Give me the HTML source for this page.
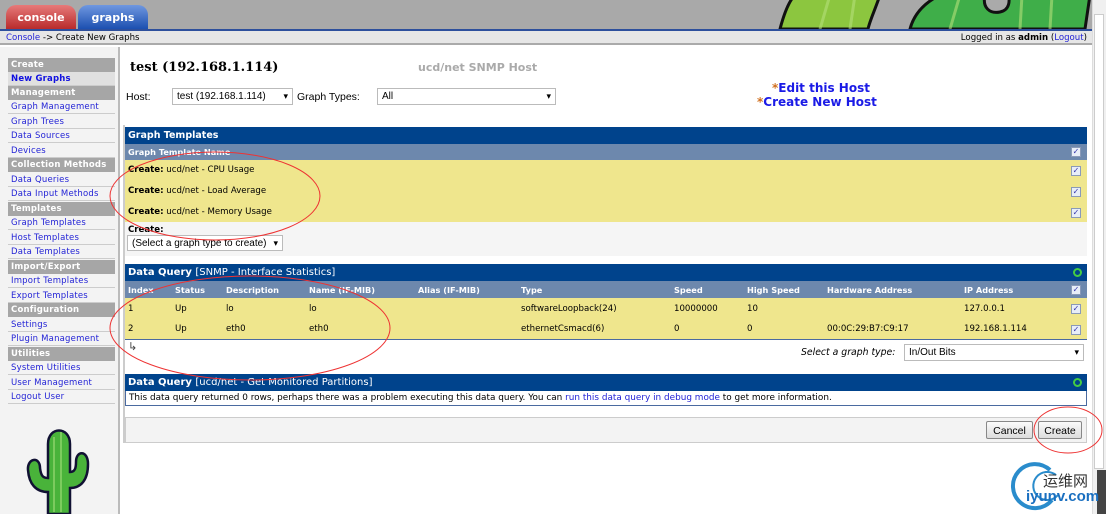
<!DOCTYPE html>
<html><head><meta charset="utf-8"><style>
*{margin:0;padding:0;box-sizing:border-box}
body{width:1106px;height:514px;overflow:hidden;background:#fff;font-family:"DejaVu Sans","Liberation Sans",sans-serif;font-size:8.6px;color:#000;position:relative}
.a{position:absolute;white-space:nowrap}
.hd{background:#00438c;color:#fff;font-weight:bold}
.sh{background:#6d88ad;color:#fff;font-weight:bold;font-size:8.2px}
.yl{background:#efe68d}
.t{font-size:8.6px}
.side div{position:absolute;left:8px;width:107px;height:14px;line-height:14px;padding-left:3px;font-size:8.5px;letter-spacing:.2px}
.sg{background:#a6a6a6;color:#fff;font-weight:bold}
.si{color:#2323d6;border-bottom:1px solid #ccc}
.cb{position:absolute;width:10px;height:10px;border:1px solid #8a9ab8;background:#e8eef8;font-size:8px;line-height:8px;text-align:center;color:#33a}
.sel{position:absolute;border:1px solid #bbb;background:#fff;font-family:"Liberation Sans",sans-serif;font-size:10px;line-height:15px;padding-left:4px}
.sel:after{content:"▾";position:absolute;right:4px;top:0;font-size:9px}
.btn{position:absolute;border:1px solid #888;border-radius:2px;background:linear-gradient(#fbfbfb,#dcdcdc);font-family:"Liberation Sans",sans-serif;font-size:10.5px;text-align:center;line-height:18px}
</style></head><body>
<div class="a" style="left:0;top:0;width:1092px;height:29px;background:#a9a9a9"></div>
<div class="a" style="left:6px;top:5px;width:70px;height:24px;background:linear-gradient(#e77a7a,#b82b2b);border-radius:10px 10px 0 0;color:#fff;font-weight:bold;font-size:11px;text-align:center;line-height:26px">console</div>
<div class="a" style="left:78px;top:5px;width:70px;height:24px;background:linear-gradient(#6f97e0,#1c4fb0);border-radius:10px 10px 0 0;color:#fff;font-weight:bold;font-size:11px;text-align:center;line-height:26px">graphs</div>
<svg class="a" style="left:760px;top:0" width="332" height="29">
<path d="M20 29 C25 10 30 0 35 -5 L120 -5 C115 10 110 20 108 29Z" fill="#8cc63f" stroke="#111" stroke-width="3"/>
<path d="M150 29 C155 10 170 0 180 -5 L330 -5 L325 29Z" fill="#3fae49" stroke="#111" stroke-width="3"/>
<path d="M225 -5 C222 8 230 14 240 12 C250 10 250 0 248 -5" fill="#aaa" stroke="#111" stroke-width="3"/>
<path d="M60 29 L70 -5 M90 29 L95 -5 M190 29 L200 -5 M260 29 L262 -5 M290 29 L292 -5" stroke="#b5e07a" stroke-width="3" opacity=".6"/>
</svg>
<div class="a" style="left:0;top:29px;width:1092px;height:2px;background:#2d4f9c"></div>
<div class="a" style="left:0;top:31px;width:1092px;height:14px;background:#e6e6e6;border-bottom:2px solid #aaa;font-size:8.6px;line-height:14px;padding-left:6px"><span style="color:#2323d6">Console</span> -&gt; Create New Graphs</div>
<div class="a" style="left:880px;top:31px;width:207px;text-align:right;font-size:8.6px;line-height:14px">Logged in as <b>admin</b> (<span style="color:#2323d6">Logout</span>)</div>
<div class="a" style="left:1092px;top:0;width:14px;height:514px;background:#f0f0f0;border-left:1px solid #ddd"></div>
<div class="a" style="left:1094px;top:14px;width:10px;height:455px;background:#fff;border:1px solid #ccc"></div>
<div class="a" style="left:1097px;top:470px;width:9px;height:44px;background:#444"></div>
<div class="a" style="left:0;top:47px;width:120px;height:467px;background:#f3f3f3;border-right:2px solid #bbb"></div>
<div class="side">
<div class="sg" style="top:58px">Create</div>
<div class="si" style="top:72px;background:#e0e0e0;font-weight:bold;color:#1010e0">New Graphs</div>
<div class="sg" style="top:86px">Management</div>
<div class="si" style="top:100px">Graph Management</div>
<div class="si" style="top:115px">Graph Trees</div>
<div class="si" style="top:129px">Data Sources</div>
<div class="si" style="top:144px">Devices</div>
<div class="sg" style="top:158px">Collection Methods</div>
<div class="si" style="top:173px">Data Queries</div>
<div class="si" style="top:187px">Data Input Methods</div>
<div class="sg" style="top:202px">Templates</div>
<div class="si" style="top:216px">Graph Templates</div>
<div class="si" style="top:231px">Host Templates</div>
<div class="si" style="top:245px">Data Templates</div>
<div class="sg" style="top:260px">Import/Export</div>
<div class="si" style="top:274px">Import Templates</div>
<div class="si" style="top:289px">Export Templates</div>
<div class="sg" style="top:303px">Configuration</div>
<div class="si" style="top:318px">Settings</div>
<div class="si" style="top:332px">Plugin Management</div>
<div class="sg" style="top:347px">Utilities</div>
<div class="si" style="top:361px">System Utilities</div>
<div class="si" style="top:376px">User Management</div>
<div class="si" style="top:390px">Logout User</div>
</div>
<svg class="a" style="left:26px;top:422px" width="74" height="92">
<path d="M22 92 L22 70 C10 70 3 62 2 48 C1 36 14 34 14 46 C15 54 17 56 22 56 L22 22 C22 4 44 4 44 22 L44 50 C49 50 50 46 50 40 C50 28 62 28 62 42 C62 58 55 66 44 66 L44 92Z" fill="#49b33a" stroke="#113" stroke-width="2.5"/>
<path d="M28 15 L28 90 M35 10 L35 90" stroke="#8ed36a" stroke-width="1.5"/>
</svg>
<div class="a" style="left:130px;top:60px;font-family:'DejaVu Serif','Liberation Serif',serif;font-weight:bold;font-size:13px">test (192.168.1.114)</div>
<div class="a" style="left:418px;top:61px;font-weight:bold;font-size:11px;color:#aaa">ucd/net SNMP Host</div>
<div class="a" style="left:126px;top:91px;font-family:'Liberation Sans',sans-serif;font-size:10.5px">Host:</div>
<div class="sel" style="left:172px;top:88px;width:121px;height:17px">test (192.168.1.114)</div>
<div class="a" style="left:297px;top:91px;font-family:'Liberation Sans',sans-serif;font-size:10.5px">Graph Types:</div>
<div class="sel" style="left:377px;top:88px;width:179px;height:17px">All</div>
<div class="a" style="left:772px;top:81px;font-weight:bold;font-size:12px;color:#1a1ae6"><span style="color:#d07020">*</span>Edit this Host</div>
<div class="a" style="left:757px;top:95px;font-weight:bold;font-size:12px;color:#1a1ae6"><span style="color:#d07020">*</span>Create New Host</div>

<div class="a hd" style="left:125px;top:127px;width:962px;height:17px;font-size:9.5px;line-height:17px;padding-left:3px">Graph Templates</div>
<div class="a sh" style="left:125px;top:144px;width:962px;height:16px;line-height:16px;padding-left:3px">Graph Template Name</div>
<div class="cb" style="left:1071px;top:147px">✓</div>
<div class="a yl" style="left:125px;top:160px;width:962px;height:62px"></div>
<div class="a t" style="left:128px;top:165px"><b>Create:</b> ucd/net - CPU Usage</div>
<div class="a t" style="left:128px;top:186px"><b>Create:</b> ucd/net - Load Average</div>
<div class="a t" style="left:128px;top:207px"><b>Create:</b> ucd/net - Memory Usage</div>
<div class="cb" style="left:1071px;top:166px">✓</div><div class="cb" style="left:1071px;top:187px">✓</div><div class="cb" style="left:1071px;top:208px">✓</div>
<div class="a" style="left:125px;top:222px;width:962px;height:34px;background:#f5f5f5"></div>
<div class="a t" style="left:128px;top:225px;font-weight:bold">Create:</div>
<div class="sel" style="left:127px;top:235px;width:156px;height:16px">(Select a graph type to create)</div>
<div class="a" style="left:123px;top:125px;width:2px;height:318px;background:#ccc"></div>

<div class="a hd" style="left:125px;top:264px;width:962px;height:17px;font-size:10px;line-height:17px;padding-left:3px">Data Query <span style="font-weight:normal">[SNMP - Interface Statistics]</span></div>
<div class="a" style="left:1073px;top:268px;width:9px;height:9px;border:2px solid #4c4;border-radius:50%"></div>
<div class="a sh" style="left:125px;top:281px;width:962px;height:17px"></div>
<div class="a sh" style="left:128px;top:285px">Index</div><div class="a sh" style="left:175px;top:285px">Status</div><div class="a sh" style="left:226px;top:285px">Description</div><div class="a sh" style="left:309px;top:285px">Name (IF-MIB)</div><div class="a sh" style="left:418px;top:285px">Alias (IF-MIB)</div><div class="a sh" style="left:521px;top:285px">Type</div><div class="a sh" style="left:674px;top:285px">Speed</div><div class="a sh" style="left:747px;top:285px">High Speed</div><div class="a sh" style="left:827px;top:285px">Hardware Address</div><div class="a sh" style="left:964px;top:285px">IP Address</div>
<div class="cb" style="left:1071px;top:285px">✓</div>
<div class="a yl" style="left:125px;top:298px;width:962px;height:42px;border-bottom:1px solid #4a6aa0"></div>
<div class="a t" style="left:128px;top:304px">1</div><div class="a t" style="left:175px;top:304px">Up</div><div class="a t" style="left:226px;top:304px">lo</div><div class="a t" style="left:309px;top:304px">lo</div><div class="a t" style="left:521px;top:304px">softwareLoopback(24)</div><div class="a t" style="left:674px;top:304px">10000000</div><div class="a t" style="left:747px;top:304px">10</div><div class="a t" style="left:964px;top:304px">127.0.0.1</div>
<div class="a t" style="left:128px;top:324px">2</div><div class="a t" style="left:175px;top:324px">Up</div><div class="a t" style="left:226px;top:324px">eth0</div><div class="a t" style="left:309px;top:324px">eth0</div><div class="a t" style="left:521px;top:324px">ethernetCsmacd(6)</div><div class="a t" style="left:674px;top:324px">0</div><div class="a t" style="left:747px;top:324px">0</div><div class="a t" style="left:827px;top:324px">00:0C:29:B7:C9:17</div><div class="a t" style="left:964px;top:324px">192.168.1.114</div>
<div class="cb" style="left:1071px;top:304px">✓</div><div class="cb" style="left:1071px;top:325px">✓</div>
<div class="a" style="left:128px;top:340px;font-size:11px;color:#444">↳</div>
<div class="a" style="left:801px;top:347px;font-style:italic;font-size:9.3px">Select a graph type:</div>
<div class="sel" style="left:904px;top:344px;width:180px;height:17px">In/Out Bits</div>

<div class="a hd" style="left:125px;top:374px;width:962px;height:17px;font-size:10px;line-height:17px;padding-left:3px">Data Query <span style="font-weight:normal">[ucd/net - Get Monitored Partitions]</span></div>
<div class="a" style="left:1073px;top:378px;width:9px;height:9px;border:2px solid #4c4;border-radius:50%"></div>
<div class="a" style="left:125px;top:391px;width:962px;height:15px;border:1px solid #4a6aa0;border-top:none;font-size:8.9px;line-height:14px;padding-left:3px">This data query returned 0 rows, perhaps there was a problem executing this data query. You can <span style="color:#2323d6">run this data query in debug mode</span> to get more information.</div>
<div class="a" style="left:125px;top:417px;width:962px;height:26px;background:#f3f3f3;border:1px solid #ccc"></div>
<div class="btn" style="left:986px;top:421px;width:47px;height:18px">Cancel</div>
<div class="btn" style="left:1038px;top:421px;width:44px;height:18px">Create</div>

<svg class="a" style="left:0;top:0" width="1106" height="514">
<ellipse cx="215" cy="196" rx="105" ry="44" fill="none" stroke="#e33" stroke-width="1"/>
<ellipse cx="250" cy="328" rx="140" ry="52" fill="none" stroke="#e33" stroke-width="1"/>
<ellipse cx="1068" cy="430" rx="34" ry="23" fill="none" stroke="#e33" stroke-width="1"/>
<path d="M1050 470 A22 22 0 1 0 1052 500" fill="none" stroke="#2a8ccc" stroke-width="4"/>
<path d="M1056 475 A14 14 0 1 0 1058 495" fill="none" stroke="#2a8ccc" stroke-width="2"/>
</svg>
<div class="a" style="left:1043px;top:470px;font-family:'Noto Sans CJK SC',sans-serif;font-size:15px;color:#333">运维网</div>
<div class="a" style="left:1026px;top:488px;font-family:'Liberation Sans',sans-serif;font-weight:bold;font-size:15px;color:#1a6fc0">iyunv.com</div>
</body></html>
